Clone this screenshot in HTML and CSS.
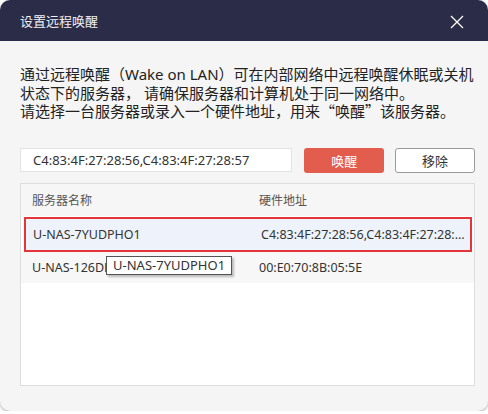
FILE: index.html
```html
<!DOCTYPE html>
<html lang="zh-CN">
<head>
    <meta charset="UTF-8">
    <meta name="viewport" content="width=device-width, initial-scale=1.0">
    <title>设置远程唤醒</title>
    <link rel="stylesheet" href="styles.css">
</head>
<body>
    <div class="dialog">
        <div class="dialog-header">
            <span class="dialog-title">设置远程唤醒</span>
            <svg class="close-icon" width="14" height="14" viewBox="0 0 14 14">
                <path d="M1 1L13 13M13 1L1 13" stroke="#ffffff" stroke-width="1.3" fill="none"/>
            </svg>
        </div>
        <div class="dialog-body">
            <p class="desc">通过远程唤醒（Wake on LAN）可在内部网络中远程唤醒休眠或关机状态下的服务器， 请确保服务器和计算机处于同一网络中。<br>请选择一台服务器或录入一个硬件地址，用来<span class="cjk">“</span>唤醒<span class="cjk">”</span>该服务器。</p>

            <div class="controls">
                <input type="text" class="mac-input" value="C4:83:4F:27:28:56,C4:83:4F:27:28:57">
                <button type="button" class="btn btn-primary">唤醒</button>
                <button type="button" class="btn btn-default">移除</button>
            </div>

            <div class="server-table">
                <div class="table-row table-head">
                    <div class="col-name">服务器名称</div>
                    <div class="col-mac">硬件地址</div>
                </div>
                <div class="table-row selected">
                    <div class="col-name">U-NAS-7YUDPHO1</div>
                    <div class="col-mac">C4:83:4F:27:28:56,C4:83:4F:27:28:57</div>
                </div>
                <div class="table-row striped">
                    <div class="col-name">U-NAS-126DE1A7</div>
                    <div class="col-mac">00:E0:70:8B:05:5E</div>
                    <div class="tooltip">U-NAS-7YUDPHO1</div>
                </div>
            </div>
        </div>
    </div>
</body>
</html>
```

FILE: styles.css
```css
body {
    margin: 0;
    background-color: #ffffff;
    font-family: "Noto Sans", "Noto Sans CJK SC", sans-serif;
    color: #333333;
}

.dialog {
    width: 488px;
    height: 411px;
    background-color: #f5f5f6;
    border-radius: 10px;
    box-shadow: 0 1px 3px rgba(0, 0, 0, 0.35);
    overflow: hidden;
    display: flex;
    flex-direction: column;
}

.dialog-header {
    height: 41px;
    flex-shrink: 0;
    background-color: #2b2c47; /* тёмно-синяя шапка */
    display: flex;
    align-items: center;
    justify-content: space-between;
    padding: 0 24px 0 20px;
}

.dialog-title {
    color: #f0f0f5;
    font-size: 13px;
    font-family: "Noto Sans CJK SC", sans-serif;
}

.close-icon {
    display: block;
    margin-top: 2px;
}

.dialog-body {
    flex: 1;
    padding: 24px 13px 25px 20px;
    display: flex;
    flex-direction: column;
}

.desc {
    margin: 0;
    font-size: 15px;
    line-height: 18.5px;
    color: #222222;
    font-family: "Noto Sans", "Noto Sans CJK SC", sans-serif;
}

.cjk {
    font-family: "Noto Sans CJK SC", sans-serif;
}

.controls {
    display: flex;
    align-items: center;
    margin-top: 27px;
    height: 25px;
}

.mac-input {
    width: 273px;
    height: 24px;
    box-sizing: border-box;
    border: 1px solid #e3e3e3;
    background-color: #ffffff;
    padding: 0 12px;
    font-family: "Noto Sans", sans-serif;
    font-size: 13px;
    color: #333333;
    outline: none;
}

.btn {
    width: 80px;
    height: 25px;
    border-radius: 3px;
    font-family: "Noto Sans CJK SC", sans-serif;
    font-size: 13px;
    cursor: pointer;
}

.btn-primary {
    margin-left: 12px;
    border: none;
    background-color: #e35d4f; /* красная кнопка */
    color: #ffffff;
}

.btn-default {
    margin-left: 11px;
    border: 1px solid #9a9a9a;
    background-color: #ffffff;
    color: #333333;
}

.server-table {
    flex: 1;
    margin-top: 10px;
    border: 1px solid #dddddd;
    background-color: #ffffff;
    width: 455px;
    box-sizing: border-box;
    font-size: 12.5px;
}

.table-row {
    position: relative;
    display: flex;
    align-items: center;
    padding: 0 0 0 11px;
}

.col-name {
    width: 227px;
    white-space: nowrap;
    overflow: hidden;
}

.col-mac {
    flex: 1;
    white-space: nowrap;
    overflow: hidden;
    text-overflow: ellipsis;
    padding-right: 3px;
}

.table-head {
    height: 32px;
    background-color: #f6f6f6;
    color: #555555;
    font-family: "Noto Sans CJK SC", sans-serif;
    font-size: 12px;
}

.selected {
    height: 31px;
    margin: 1px 2px 0 3px;
    padding-left: 7px;
    border: 2px solid #e3353a;
    background-color: #eef3fb;
}

.selected .col-name {
    width: 228px;
}

.striped {
    height: 31px;
    background-color: #f7f7f7;
}

.tooltip {
    position: absolute;
    left: 85px;
    top: 4px;
    padding: 0 6px;
    height: 17px;
    line-height: 17px;
    background-color: #ffffff;
    border: 1px solid #555555;
    box-shadow: 2px 2px 2px rgba(0, 0, 0, 0.25);
    font-size: 13px;
    color: #333333;
}
```
